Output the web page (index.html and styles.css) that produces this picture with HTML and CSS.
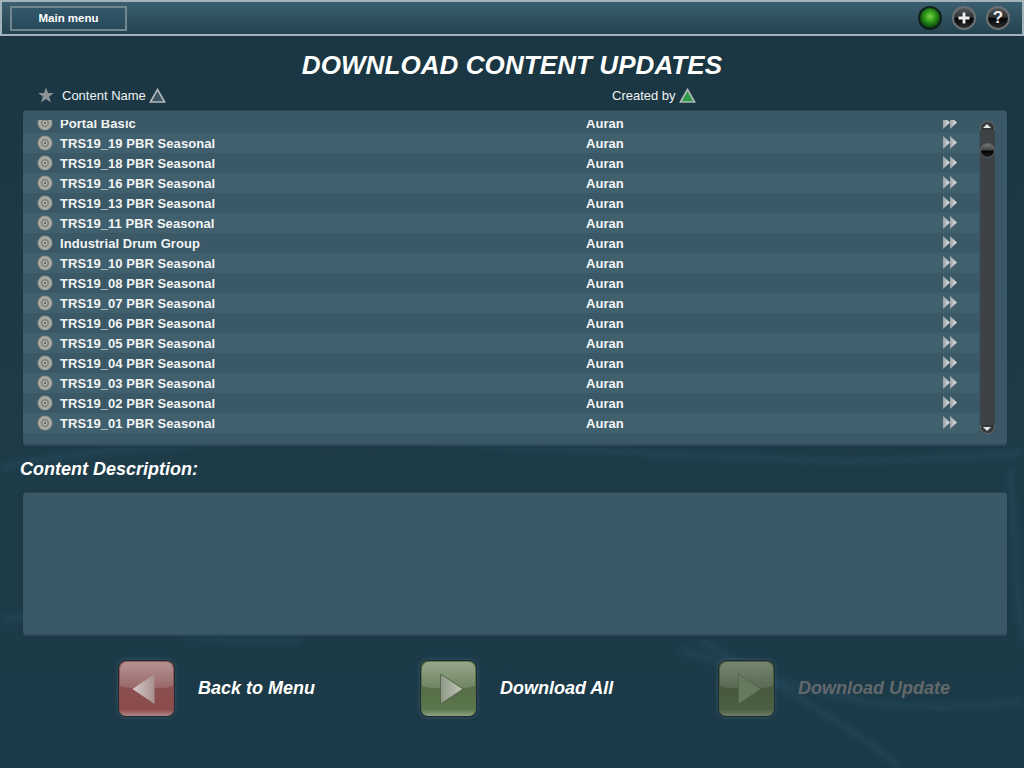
FILE: index.html
```html
<!DOCTYPE html>
<html lang="en">
<head>
  <meta charset="UTF-8" />
  <title>Download Content Updates</title>
  <link rel="stylesheet" href="styles.css">
</head>
<body>
  <svg width="0" height="0" class="defs">
    <defs>
      <radialGradient id="discFill" cx="50%" cy="50%" r="50%">
        <stop offset="0" stop-color="#c8c8c2" />
        <stop offset="0.4" stop-color="#7f7f79" />
        <stop offset="0.72" stop-color="#b4b4ad" />
        <stop offset="1" stop-color="#85857f" />
      </radialGradient>
      <linearGradient id="arrowFill" x1="0" y1="0" x2="1" y2="0">
        <stop offset="0" stop-color="#9aa1a4" />
        <stop offset="1" stop-color="#e6e8e8" />
      </linearGradient>
      <linearGradient id="backFill" x1="1" y1="0" x2="0" y2="0">
        <stop offset="0" stop-color="#a98f8e" />
        <stop offset="1" stop-color="#d6cbca" />
      </linearGradient>
      <linearGradient id="allFill" x1="0" y1="0" x2="1" y2="0">
        <stop offset="0" stop-color="#8f9886" />
        <stop offset="1" stop-color="#c2c7ba" />
      </linearGradient>
      <symbol id="disc" viewBox="0 0 16 16">
        <circle cx="8" cy="8" r="7.5" fill="url(#discFill)" />
        <circle cx="8" cy="8" r="2.2" fill="#b9b9b2" />
        <circle cx="8" cy="8" r="1" fill="#4a4d4f" />
      </symbol>
      <symbol id="ff" viewBox="0 0 14 13">
        <path d="M0 0 L7 6.5 L0 13 Z" fill="url(#arrowFill)" />
        <path d="M7 0 L14 6.5 L7 13 Z" fill="url(#arrowFill)" />
      </symbol>
    </defs>
  </svg>

  <div class="page">
    <svg class="wisps" width="1024" height="768" viewBox="0 0 1024 768">
      <path d="M0 468 C120 440 320 436 520 446 S860 470 1024 452" />
      <path d="M0 620 C90 600 180 650 300 640" />
      <path d="M680 650 C780 680 880 725 1024 700" />
      <path d="M700 640 C800 700 860 730 900 768" />
      <path d="M1010 470 C1016 540 1016 600 1024 640" />
    </svg>

    <header class="topbar">
      <a class="menu-btn">Main menu</a>
      <div class="status-icons">
        <span class="round round-green"></span>
        <span class="round round-dark">
          <svg width="14" height="14" viewBox="0 0 14 14"><path d="M5.6 1.5 H8.4 V5.6 H12.5 V8.4 H8.4 V12.5 H5.6 V8.4 H1.5 V5.6 H5.6 Z" fill="#eee" /></svg>
        </span>
        <span class="round round-dark round-help">?</span>
      </div>
    </header>

    <h1 class="title">DOWNLOAD CONTENT UPDATES</h1>

    <div class="columns">
      <div class="col col-name">
        <svg class="star" width="16" height="16" viewBox="0 0 16 16"><path d="M8 0.5 L10 6 L15.8 6 L11.2 9.6 L12.9 15.4 L8 12 L3.1 15.4 L4.8 9.6 L0.2 6 L6 6 Z" fill="#8b9296" /></svg>
        <span>Content Name</span>
        <svg width="17" height="15" viewBox="0 0 17 15"><path d="M8.5 1.5 L15.6 14 H1.4 Z" fill="#3c5561" stroke="#b5b8b8" stroke-width="1.6" /></svg>
      </div>
      <div class="col col-author">
        <span>Created by</span>
        <svg width="17" height="15" viewBox="0 0 17 15"><path d="M8.5 1.5 L15.6 14 H1.4 Z" fill="#2f9a45" stroke="#b5b8b8" stroke-width="1.6" /></svg>
      </div>
    </div>

    <section class="panel list-panel">
      <div class="list">
        <div class="row"><svg class="disc"><use href="#disc" /></svg><span class="name">Portal Basic</span><span class="author">Auran</span><svg class="ff"><use href="#ff" /></svg></div>
        <div class="row"><svg class="disc"><use href="#disc" /></svg><span class="name">TRS19_19 PBR Seasonal</span><span class="author">Auran</span><svg class="ff"><use href="#ff" /></svg></div>
        <div class="row"><svg class="disc"><use href="#disc" /></svg><span class="name">TRS19_18 PBR Seasonal</span><span class="author">Auran</span><svg class="ff"><use href="#ff" /></svg></div>
        <div class="row"><svg class="disc"><use href="#disc" /></svg><span class="name">TRS19_16 PBR Seasonal</span><span class="author">Auran</span><svg class="ff"><use href="#ff" /></svg></div>
        <div class="row"><svg class="disc"><use href="#disc" /></svg><span class="name">TRS19_13 PBR Seasonal</span><span class="author">Auran</span><svg class="ff"><use href="#ff" /></svg></div>
        <div class="row"><svg class="disc"><use href="#disc" /></svg><span class="name">TRS19_11 PBR Seasonal</span><span class="author">Auran</span><svg class="ff"><use href="#ff" /></svg></div>
        <div class="row"><svg class="disc"><use href="#disc" /></svg><span class="name">Industrial Drum Group</span><span class="author">Auran</span><svg class="ff"><use href="#ff" /></svg></div>
        <div class="row"><svg class="disc"><use href="#disc" /></svg><span class="name">TRS19_10 PBR Seasonal</span><span class="author">Auran</span><svg class="ff"><use href="#ff" /></svg></div>
        <div class="row"><svg class="disc"><use href="#disc" /></svg><span class="name">TRS19_08 PBR Seasonal</span><span class="author">Auran</span><svg class="ff"><use href="#ff" /></svg></div>
        <div class="row"><svg class="disc"><use href="#disc" /></svg><span class="name">TRS19_07 PBR Seasonal</span><span class="author">Auran</span><svg class="ff"><use href="#ff" /></svg></div>
        <div class="row"><svg class="disc"><use href="#disc" /></svg><span class="name">TRS19_06 PBR Seasonal</span><span class="author">Auran</span><svg class="ff"><use href="#ff" /></svg></div>
        <div class="row"><svg class="disc"><use href="#disc" /></svg><span class="name">TRS19_05 PBR Seasonal</span><span class="author">Auran</span><svg class="ff"><use href="#ff" /></svg></div>
        <div class="row"><svg class="disc"><use href="#disc" /></svg><span class="name">TRS19_04 PBR Seasonal</span><span class="author">Auran</span><svg class="ff"><use href="#ff" /></svg></div>
        <div class="row"><svg class="disc"><use href="#disc" /></svg><span class="name">TRS19_03 PBR Seasonal</span><span class="author">Auran</span><svg class="ff"><use href="#ff" /></svg></div>
        <div class="row"><svg class="disc"><use href="#disc" /></svg><span class="name">TRS19_02 PBR Seasonal</span><span class="author">Auran</span><svg class="ff"><use href="#ff" /></svg></div>
        <div class="row"><svg class="disc"><use href="#disc" /></svg><span class="name">TRS19_01 PBR Seasonal</span><span class="author">Auran</span><svg class="ff"><use href="#ff" /></svg></div>
      </div>
      <div class="scrollbar">
        <span class="cap cap-top"></span>
        <span class="thumb"></span>
        <span class="cap cap-bottom"></span>
      </div>
    </section>

    <h2 class="desc-label">Content Description:</h2>
    <section class="panel desc-panel"></section>

    <footer class="actions">
      <a class="action action-back">
        <span class="glass glass-red">
          <svg width="36" height="36" viewBox="0 0 36 36"><path d="M25.5 3 V33 L3.5 18 Z" fill="url(#backFill)" /></svg>
        </span>
        <span class="action-text">Back to Menu</span>
      </a>
      <a class="action action-all">
        <span class="glass glass-green">
          <svg width="36" height="36" viewBox="0 0 36 36"><path d="M9.5 3 V33 L32 18 Z" fill="url(#allFill)" stroke="#4d5d43" stroke-width="0.8" /></svg>
        </span>
        <span class="action-text">Download All</span>
      </a>
      <a class="action action-update">
        <span class="glass glass-green glass-off">
          <svg width="36" height="36" viewBox="0 0 36 36"><path d="M9.5 3 V33 L32 18 Z" fill="#667a60" stroke="#4f6149" stroke-width="0.8" /></svg>
        </span>
        <span class="action-text">Download Update</span>
      </a>
    </footer>
  </div>
</body>
</html>
```

FILE: styles.css
```css
* {
  box-sizing: border-box;
}
html, body {
  margin: 0;
  padding: 0;
}
body {
  width: 1024px;
  height: 768px;
  overflow: hidden;
  font-family: "Liberation Sans", Arial, sans-serif;
  color: #fff;
  background: #1c3a48;
}
.defs {
  position: absolute;
}
.page {
  position: relative;
  width: 1024px;
  height: 768px;
  display: flex;
  flex-direction: column;
  background: linear-gradient(to bottom, #1a3642 0, #1e3b48 60%, #1c3947 100%);
}
.wisps {
  position: absolute;
  top: 0;
  left: 0;
  fill: none;
  stroke: #2c5a70;
  stroke-width: 5;
  opacity: 0.4;
  filter: blur(3px);
}

/* top bar */
.topbar {
  position: relative;
  flex: none;
  height: 36px;
  display: flex;
  align-items: center;
  justify-content: space-between;
  padding: 0 8px;
  border: 2px solid #a3b3b9;
  background: linear-gradient(to bottom, #3b5f70 0, #31525f 45%, #244351 100%);
}
.menu-btn {
  width: 117px;
  height: 25px;
  line-height: 21px;
  text-align: center;
  font-size: 11.5px;
  font-weight: bold;
  border: 2px solid #71868f;
  background: linear-gradient(to bottom, #33586a, #28495a);
}
.status-icons {
  display: flex;
  align-items: center;
  gap: 10px;
  margin-right: 4px;
}
.round {
  width: 24px;
  height: 24px;
  border-radius: 50%;
  display: flex;
  align-items: center;
  justify-content: center;
  border: 2px solid #6c7173;
  background: linear-gradient(to bottom, #55585a 0, #2b2d2e 48%, #050505 52%, #2a2b2c 100%);
}
.round-green {
  border-color: #10201a;
  background: radial-gradient(circle at 50% 42%, #7fd04c 0, #2f9a1b 35%, #0c4a10 70%, #07140c 100%);
}
.round-help {
  font-size: 17px;
  font-weight: bold;
  color: #eee;
}

/* title and sort row */
.title {
  position: relative;
  flex: none;
  margin: 0;
  padding-top: 13px;
  height: 48px;
  line-height: 32px;
  text-align: center;
  font-size: 26px;
  letter-spacing: 0.08px;
  font-style: italic;
  font-weight: bold;
}
.columns {
  flex: none;
  position: relative;
  height: 26px;
  padding: 0 0 4px 38px;
  display: flex;
  align-items: center;
  font-size: 13px;
  color: #eef2f3;
}
.col {
  display: flex;
  align-items: center;
  gap: 3px;
}
.col-name {
  width: 574px;
}
.star {
  margin-right: 5px;
}

/* panels */
.panel {
  position: relative;
  margin: 0 17px 0 23px;
  border-radius: 4px;
  background: #3a5866;
  box-shadow: inset 0 1px 0 #2c4856, inset 0 -2px 0 #2f4b59, 0 0 2px #14303d;
}
.list-panel {
  flex: none;
  height: 336px;
  display: flex;
  padding: 10px 11px 0 0;
}
.list {
  width: 956px;
  height: 313px;
  overflow: hidden;
}
.row {
  height: 20px;
  display: flex;
  align-items: center;
  padding-left: 14px;
  font-size: 13px;
  font-weight: bold;
  letter-spacing: 0.06px;
  color: #f3f5f5;
}
.row:first-child {
  margin-top: -7px;
}
.row:nth-child(even) {
  background: #41606e;
}
.disc {
  flex: none;
  width: 16px;
  height: 16px;
  margin-right: 7px;
}
.name {
  width: 526px;
}
.author {
  width: 357px;
}
.ff {
  flex: none;
  width: 14px;
  height: 13px;
  margin-top: -1px;
}
.scrollbar {
  position: relative;
  flex: none;
  width: 15px;
  height: 313px;
  margin-left: 1px;
  margin-top: 1px;
  border-radius: 7px 7px 5px 5px;
  background: #3c4246;
}
.cap {
  position: absolute;
  left: 0;
  width: 15px;
  height: 9px;
  background: #33383b;
  border: 1px solid #666c6f;
}
.cap::after {
  content: "";
  position: absolute;
  left: 2px;
  width: 0;
  height: 0;
  border-left: 4.5px solid transparent;
  border-right: 4.5px solid transparent;
}
.cap-top {
  top: 0;
  border-radius: 7px 7px 0 0;
  border-bottom: 0;
}
.cap-top::after {
  top: 2px;
  border-bottom: 4px solid #e4e6e6;
}
.cap-bottom {
  bottom: 0;
  border-radius: 0 0 7px 7px;
  border-top: 0;
}
.cap-bottom::after {
  bottom: 2px;
  border-top: 4px solid #e4e6e6;
}
.thumb {
  position: absolute;
  top: 22px;
  left: 0;
  width: 15px;
  height: 15px;
  border-radius: 50%;
  border: 1px solid #5d6467;
  background: linear-gradient(to bottom, #77797a 0, #434546 45%, #050505 55%, #1e1e1e 100%);
}

/* description */
.desc-label {
  position: relative;
  flex: none;
  margin: 0;
  height: 46px;
  padding: 13px 0 0 20px;
  line-height: 20px;
  font-size: 18px;
  font-style: italic;
  font-weight: bold;
}
.desc-panel {
  flex: none;
  height: 144px;
}

/* bottom buttons */
.actions {
  position: relative;
  flex: none;
  display: flex;
  padding: 24px 0 0 118px;
}
.action {
  display: flex;
  align-items: center;
  gap: 23px;
  font-size: 18px;
  font-style: italic;
  font-weight: bold;
}
.action-back {
  width: 302px;
}
.action-all {
  width: 298px;
}
.action-update .action-text {
  color: #62696c;
}
.glass {
  position: relative;
  flex: none;
  width: 57px;
  height: 57px;
  display: flex;
  align-items: center;
  justify-content: center;
  border-radius: 8px;
  border: 1px solid #1d2a30;
  box-shadow: 0 0 4px #3a5a6a;
}
.glass::before {
  content: "";
  position: absolute;
  left: 1px;
  right: 1px;
  top: 1px;
  height: 26px;
  border-radius: 7px 7px 12px 12px / 7px 7px 3px 3px;
  background: linear-gradient(to bottom, rgba(255,255,255,0.34), rgba(255,255,255,0.14));
}
.glass svg {
  position: relative;
}
.glass-red {
  background: linear-gradient(to bottom, #8c5b5a 0, #8a4f50 50%, #8c4b4c 88%, #b08887 100%);
}
.glass-green {
  background: linear-gradient(to bottom, #5f7a50 0, #566f48 50%, #5b754c 88%, #8fa383 100%);
}
.glass-off {
  background: linear-gradient(to bottom, #4a5f43 0, #46593f 50%, #4a5f43 88%, #6d7e65 100%);
}
.glass-off::before {
  background: linear-gradient(to bottom, rgba(255,255,255,0.24), rgba(255,255,255,0.1));
}
```
